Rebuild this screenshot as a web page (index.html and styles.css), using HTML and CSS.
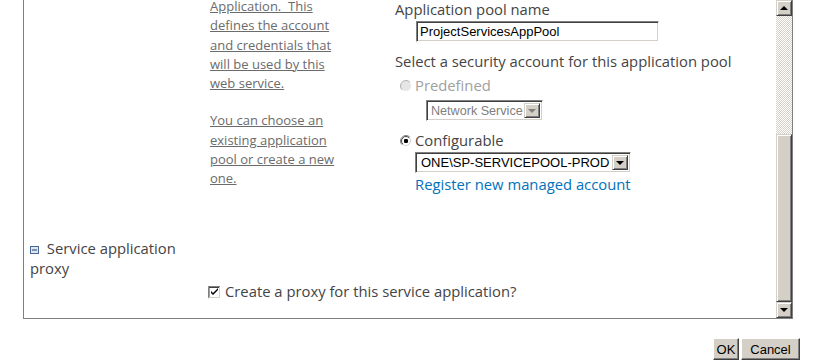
FILE: index.html
```html
<!DOCTYPE html>
<html>
<head>
<meta charset="utf-8">
<link rel="stylesheet" href="styles.css">
</head>
<body>
<div class="dialog">
  <div class="panel">
    <div class="content">
      <div class="section s1">
        <div class="col-head"></div>
        <div class="desc">
          <p>Application.&nbsp; This<br>defines the account<br>and credentials that<br>will be used by this<br>web service.</p>
          <p>You can choose an<br>existing application<br>pool or create a new<br>one.</p>
        </div>
        <div class="form">
          <div class="label">Application pool name</div>
          <div class="textbox">ProjectServicesAppPool</div>
          <div class="label label2">Select a security account for this application pool</div>
          <div class="radio-row disabled r1">
            <svg class="radio" width="12" height="12" viewBox="0 0 12 12">
              <defs>
                <linearGradient id="go" x1="0" y1="0" x2="1" y2="1"><stop offset="0.45" stop-color="#b0b0b0"/><stop offset="0.55" stop-color="#ffffff"/></linearGradient>
              </defs>
              <circle cx="6" cy="6" r="5.5" fill="#e6e6e6" stroke="url(#go)"/>
            </svg>
            <span>Predefined</span>
          </div>
          <div class="select sel-disabled">
            <span class="sel-text">Network Service</span>
            <span class="drop"><span class="arrow"></span></span>
          </div>
          <div class="radio-row r2">
            <svg class="radio" width="12" height="12" viewBox="0 0 12 12">
              <defs>
                <linearGradient id="g1" x1="0" y1="0" x2="1" y2="1"><stop offset="0.45" stop-color="#808080"/><stop offset="0.55" stop-color="#ffffff"/></linearGradient>
                <linearGradient id="g2" x1="0" y1="0" x2="1" y2="1"><stop offset="0.45" stop-color="#404040"/><stop offset="0.55" stop-color="#d4d0c8"/></linearGradient>
              </defs>
              <circle cx="6" cy="6" r="5.5" fill="#fff" stroke="url(#g1)"/>
              <circle cx="6" cy="6" r="4.5" fill="#fff" stroke="url(#g2)"/>
              <rect x="4" y="4" width="4" height="4" rx="1.2" fill="#000"/>
            </svg>
            <span>Configurable</span>
          </div>
          <div class="select sel-account">
            <span class="sel-text">ONE\SP-SERVICEPOOL-PROD</span>
            <span class="drop"><span class="arrow"></span></span>
          </div>
          <a class="link" href="#">Register new managed account</a>
        </div>
      </div>
      <div class="section s2">
        <div class="head">
          <svg class="collapse" width="9" height="9" viewBox="0 0 9 9">
            <rect x="0.5" y="0.5" width="8" height="7" fill="#dfe6ef" stroke="#46679a"/>
            <rect x="2" y="3.5" width="5" height="1" fill="#1f3a66"/>
          </svg>
          Service application proxy
        </div>
        <div class="check-row">
          <svg class="checkbox" width="13" height="13" viewBox="0 0 13 13">
            <rect x="0" y="0" width="13" height="13" fill="#ffffff"/>
            <path d="M0 12.5 V0.5 H12" stroke="#808080" fill="none"/>
            <path d="M1 11.5 V1.5 H11" stroke="#404040" fill="none"/>
            <path d="M1.5 11.5 H11.5 V1" stroke="#d4d0c8" fill="none"/>
            <path d="M3 5 L3 7 L5 9 L10 4 L10 2 L5 7 Z" fill="#000"/>
          </svg>
          <span>Create a proxy for this service application?</span>
        </div>
      </div>
    </div>
    <div class="scrollbar">
      <div class="sb-btn"><span class="sb-up"></span></div>
      <div class="sb-track"></div>
      <div class="sb-thumb"></div>
      <div class="sb-btn"><span class="sb-down"></span></div>
    </div>
  </div>
  <div class="buttons">
    <button class="btn btn-ok">OK</button>
    <button class="btn btn-cancel">Cancel</button>
  </div>
</div>
</body>
</html>
```

FILE: styles.css
```css
html, body {
  margin: 0;
  padding: 0;
  background: #ffffff;
}
body {
  font-family: "Open Sans", "Noto Sans", sans-serif;
  color: #444444;
}
.dialog {
  padding-left: 23px;
  width: 777px;
}
.panel {
  display: flex;
  width: 770px;
  height: 319px;
  box-sizing: border-box;
  border: 1px solid #808080;
  border-top: none;
}
.content {
  flex: 1;
  overflow: hidden;
  padding-left: 6px;
}
.section.s1 {
  display: grid;
  grid-template-columns: 180px 185px 1fr;
  align-items: start;
}
.desc {
  margin-top: -3px;
  font-size: 13px;
  line-height: 19.25px;
  color: #6b6b6b;
  text-decoration: underline;
  white-space: nowrap;
}
.desc p {
  margin: 0 0 18px 0;
}
.form {
  font-size: 14.8px;
  line-height: 19px;
  color: #444444;
}
.label {
  white-space: nowrap;
}
.textbox {
  margin: 2px 0 0 21px;
  width: 243px;
  height: 21px;
  box-sizing: border-box;
  border: 1px solid;
  border-color: #808080 #ffffff #ffffff #808080;
  box-shadow: inset 1px 1px 0 #404040, inset -1px -1px 0 #d4d0c8;
  font-family: "Liberation Sans", Arial, sans-serif;
  font-size: 13px;
  line-height: 19px;
  color: #000;
  padding-left: 3px;
}
.label2 {
  margin-top: 10px;
}
.radio-row {
  display: flex;
  align-items: flex-start;
  padding-left: 5px;
}
.radio-row .radio {
  margin-top: 4px;
  margin-right: 3px;
  flex: none;
}
.r1 {
  margin-top: 5px;
}
.disabled {
  color: #a0a0a0;
}
.select {
  display: flex;
  align-items: stretch;
  box-sizing: border-box;
  border: 1px solid;
  border-color: #808080 #ffffff #ffffff #808080;
  box-shadow: inset 1px 1px 0 #404040, inset -1px -1px 0 #d4d0c8;
  padding: 2px;
  font-family: "Liberation Sans", Arial, sans-serif;
  font-size: 13px;
  line-height: 16px;
  background: #fff;
}
.sel-text {
  flex: 1;
  padding-left: 3px;
  white-space: nowrap;
  overflow: hidden;
}
.sel-disabled {
  margin: 5px 0 0 31px;
  width: 117px;
  height: 21px;
  color: #808080;
  font-size: 12.6px;
}
.sel-disabled .sel-text {
  padding-left: 2px;
}
.sel-account {
  margin: 2px 0 0 20px;
  width: 216px;
  height: 21px;
  color: #000;
}
.drop {
  width: 16px;
  flex: none;
  box-sizing: border-box;
  background: #d4d0c8;
  border: 1px solid;
  border-color: #d4d0c8 #404040 #404040 #d4d0c8;
  box-shadow: inset 1px 1px 0 #ffffff, inset -1px -1px 0 #808080;
  display: flex;
  align-items: center;
  justify-content: center;
}
.arrow {
  width: 0;
  height: 0;
  border-left: 4px solid transparent;
  border-right: 4px solid transparent;
  border-top: 4px solid #000;
  margin-top: 1px;
}
.sel-disabled .arrow {
  border-top-color: #808080;
}
.r2 {
  margin-top: 10px;
}
.link {
  display: block;
  margin: 2px 0 0 20px;
  color: #0072bc;
  text-decoration: none;
  white-space: nowrap;
}
.section.s2 {
  margin-top: 32px;
}
.head {
  width: 170px;
  font-size: 14.8px;
  line-height: 20px;
  color: #444444;
}
.collapse {
  vertical-align: -1px;
  margin-right: 4px;
}
.check-row {
  display: flex;
  align-items: flex-start;
  margin: 3px 0 0 178px;
  font-size: 14.8px;
  line-height: 20px;
  color: #444444;
  white-space: nowrap;
}
.checkbox {
  margin-top: 5px;
  margin-right: 4px;
  flex: none;
}
.scrollbar {
  width: 16px;
  display: flex;
  flex-direction: column;
}
.sb-btn, .sb-thumb {
  box-sizing: border-box;
  background: #d4d0c8;
  border: 1px solid;
  border-color: #d4d0c8 #404040 #404040 #d4d0c8;
  box-shadow: inset 1px 1px 0 #ffffff, inset -1px -1px 0 #808080;
}
.sb-btn {
  height: 16px;
  display: flex;
  align-items: center;
  justify-content: center;
  flex: none;
}
.sb-up {
  width: 0;
  height: 0;
  border-left: 4px solid transparent;
  border-right: 4px solid transparent;
  border-bottom: 4px solid #000;
}
.sb-down {
  width: 0;
  height: 0;
  border-left: 4px solid transparent;
  border-right: 4px solid transparent;
  border-top: 4px solid #000;
}
.sb-track {
  height: 118px;
  flex: none;
  background-color: #ffffff;
  background-image: conic-gradient(#d4d0c8 25%, #ffffff 0 50%, #d4d0c8 0 75%, #ffffff 0);
  background-size: 2px 2px;
}
.sb-thumb {
  flex: 1;
}
.buttons {
  display: flex;
  justify-content: flex-end;
  gap: 2px;
  margin-top: 19px;
}
.btn {
  height: 22px;
  box-sizing: border-box;
  background: #d4d0c8;
  border: 1px solid;
  border-color: #ffffff #404040 #404040 #ffffff;
  box-shadow: inset -1px -1px 0 #808080;
  font-family: "Liberation Sans", Arial, sans-serif;
  font-size: 13px;
  color: #000;
  padding: 0;
  margin: 0;
}
.btn-ok {
  width: 26px;
}
.btn-cancel {
  width: 59px;
}
```
